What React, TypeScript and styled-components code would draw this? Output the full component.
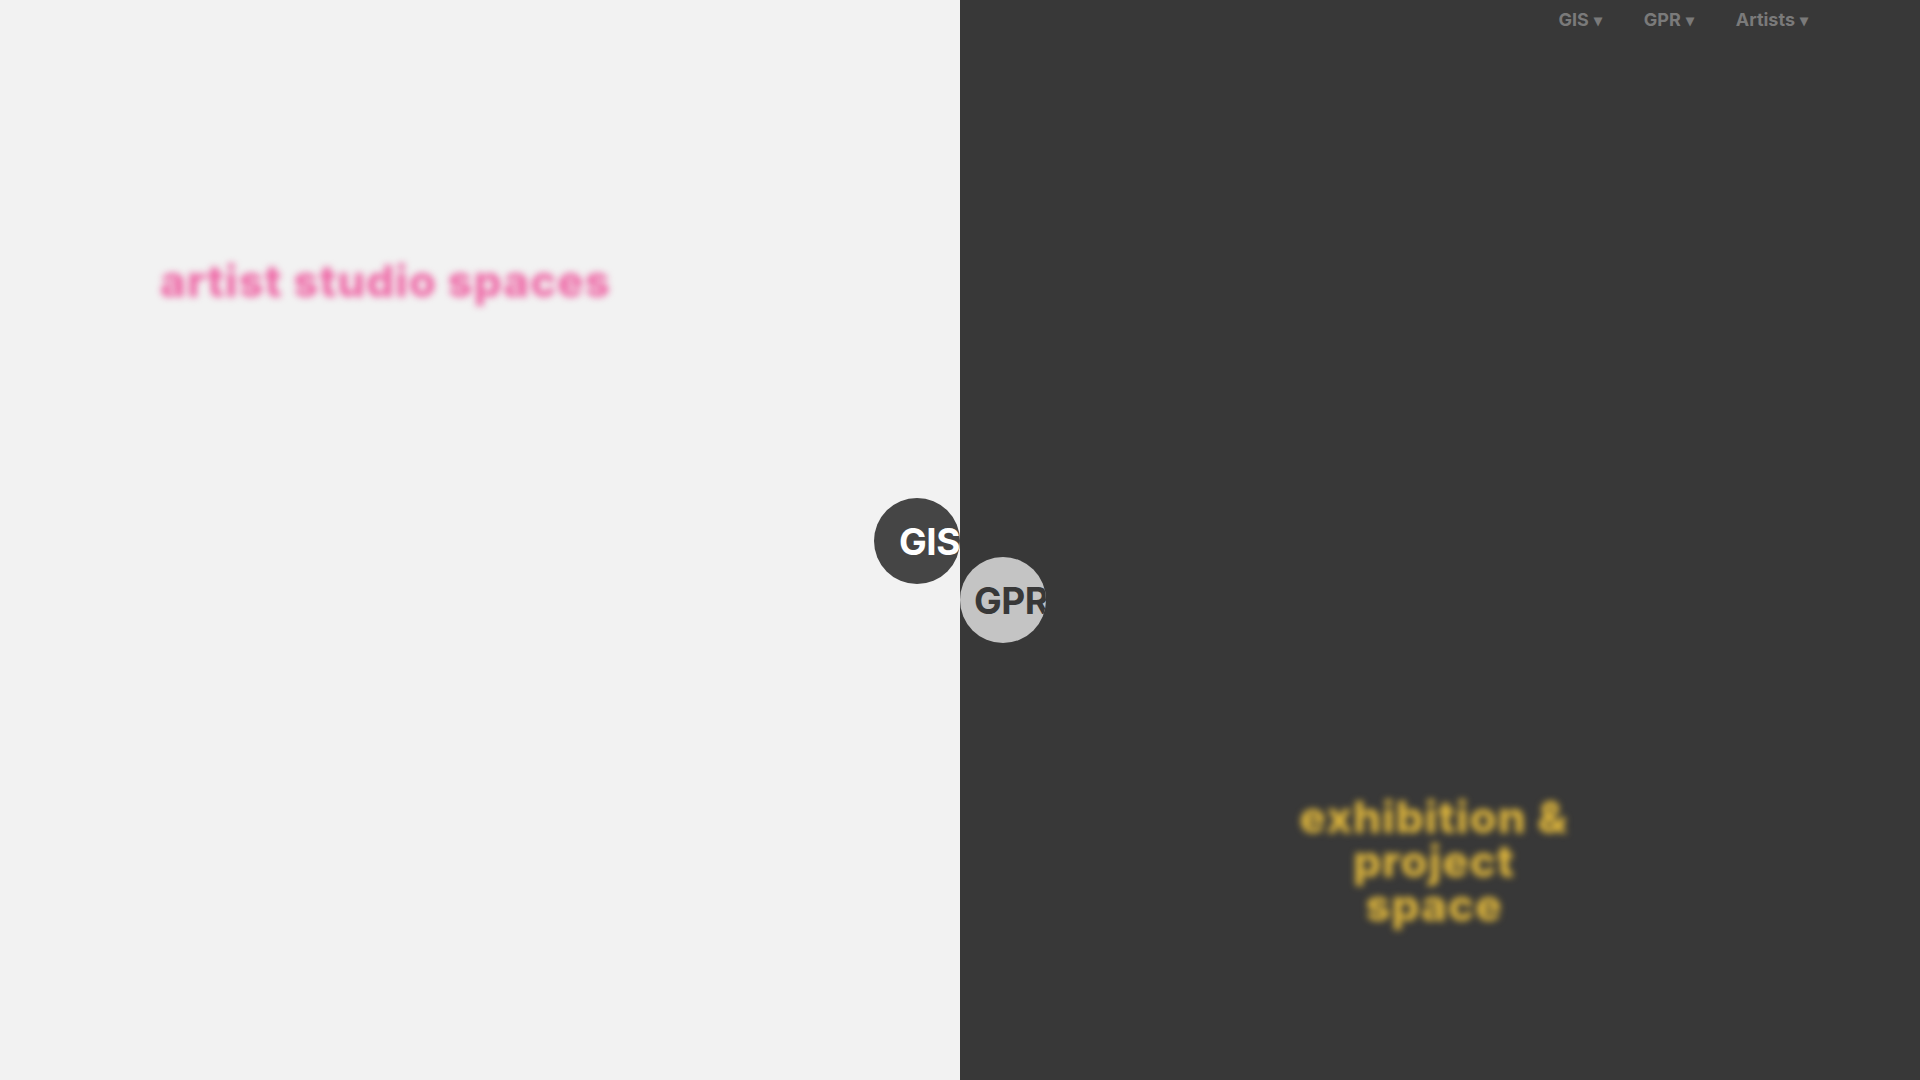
import styled, { createGlobalStyle } from "styled-components";

const GlobalStyle = createGlobalStyle`
  html, body {
    margin: 0;
    padding: 0;
    height: 100%;
  }
  body {
    font-family: Inter, "Noto Sans", sans-serif;
    overflow: hidden;
  }
`;

const Page = styled.main`
  position: relative;
  display: grid;
  grid-template-columns: 960px 960px;
  width: 1920px;
  height: 1080px;
`;

const Half = styled.section<{ dark?: boolean }>`
  background: ${(p) => (p.dark ? "#383838" : "#f2f2f2")};
  display: flex;
  flex-direction: column;
`;

const Nav = styled.nav`
  display: flex;
  justify-content: flex-end;
  gap: 42px;
  padding: 9px 112px 0 0;
  height: 31px;
`;

const NavItem = styled.a`
  color: #7a7a7a;
  font-size: 18px;
  font-weight: 700;
  text-decoration: none;
  cursor: pointer;
`;

const Caret = styled.span`
  font-size: 16px;
  margin-left: 5px;
`;

const BlurTitle = styled.h2<{ color: string }>`
  margin: 0;
  color: ${(p) => p.color};
  font-size: 44px;
  font-weight: 800;
  line-height: 44px;
  letter-spacing: 1px;
  filter: blur(3.5px);
`;

const LeftTitle = styled(BlurTitle)`
  padding: 259px 0 0 160px;
`;

const RightTitle = styled(BlurTitle)`
  align-self: center;
  width: 290px;
  margin: 755px 0 0 -12px;
  text-align: center;
`;

const Bubble = styled.a<{ bg: string; fg: string; top: number; left: number; pad: number }>`
  position: absolute;
  top: ${(p) => p.top}px;
  left: ${(p) => p.left}px;
  width: 86px;
  height: 86px;
  border-radius: 50%;
  overflow: hidden;
  background: ${(p) => p.bg};
  color: ${(p) => p.fg};
  display: flex;
  align-items: center;
  padding-left: ${(p) => p.pad}px;
  box-sizing: border-box;
  font-size: 37px;
  font-weight: 700;
  letter-spacing: -0.5px;
  white-space: nowrap;
  text-decoration: none;
  cursor: pointer;
`;

export default function App() {
  return (
    <>
      <GlobalStyle />
      <Page>
        <Half>
          <LeftTitle color="#ee6aa7">artist studio spaces</LeftTitle>
        </Half>
        <Half dark>
          <Nav>
            <NavItem>
              GIS<Caret>▾</Caret>
            </NavItem>
            <NavItem>
              GPR<Caret>▾</Caret>
            </NavItem>
            <NavItem>
              Artists<Caret>▾</Caret>
            </NavItem>
          </Nav>
          <RightTitle color="#dcb43c">exhibition &amp; project space</RightTitle>
        </Half>
        <Bubble bg="#454545" fg="#ffffff" top={498} left={874} pad={25}>
          GIS
        </Bubble>
        <Bubble bg="#c4c4c4" fg="#383838" top={557} left={960} pad={14}>
          GPR
        </Bubble>
      </Page>
    </>
  );
}
